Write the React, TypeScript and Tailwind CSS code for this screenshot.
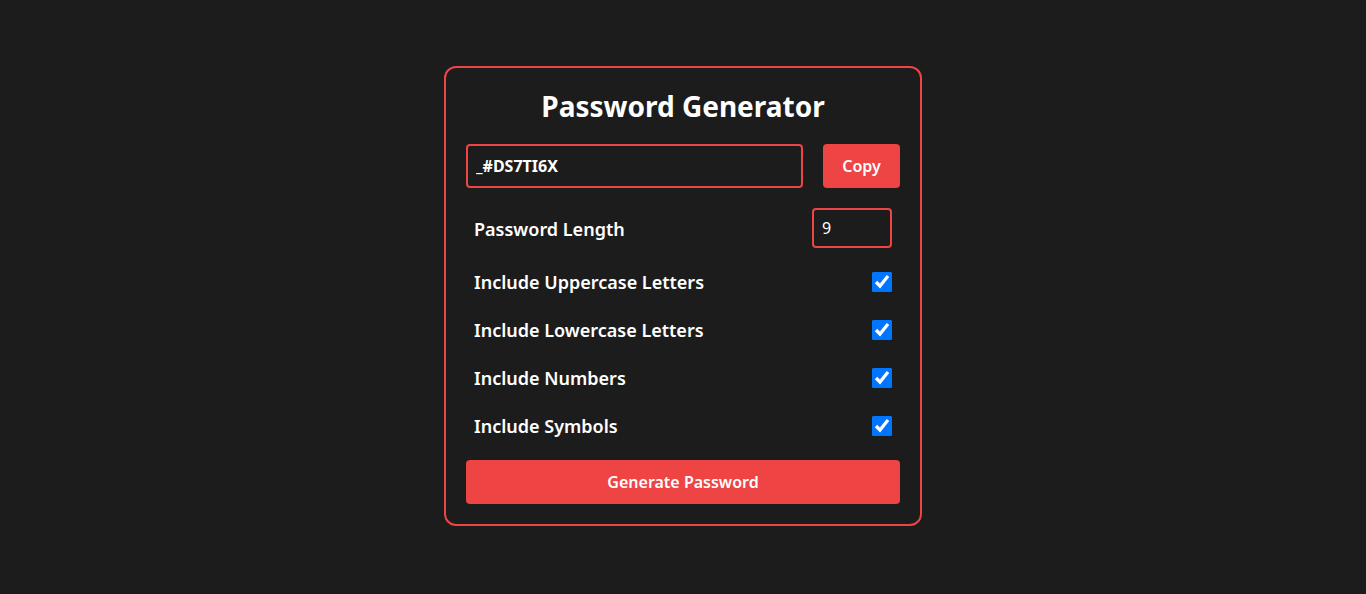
import React from "react";

const Option = ({
  label,
  checked,
  onChange,
}: {
  label: string;
  checked: boolean;
  onChange: (v: boolean) => void;
}) => (
  <label className="flex h-12 items-center justify-between px-2">
    <span className="text-lg font-semibold">{label}</span>
    <input
      type="checkbox"
      className="h-5 w-5 accent-[#0075ff]"
      checked={checked}
      onChange={(ev) => onChange(ev.currentTarget.checked)}
    />
  </label>
);

const App = () => {
  const [password] = React.useState("_#DS7TI6X");
  const [length, setLength] = React.useState("9");
  const [upper, setUpper] = React.useState(true);
  const [lower, setLower] = React.useState(true);
  const [numbers, setNumbers] = React.useState(true);
  const [symbols, setSymbols] = React.useState(true);

  return (
    <div
      className="flex min-h-[594px] justify-center bg-[#1c1c1c] pt-[66px] text-white"
      style={{ fontFamily: '"Noto Sans", sans-serif' }}
    >
      <div className="flex h-fit w-[478px] flex-col rounded-xl border-2 border-[#ef4444] bg-[#1c1c1c] p-5">
        <h1 className="h-9 text-center text-[28px] leading-9 font-bold">
          Password Generator
        </h1>
        <div className="mt-5 flex gap-5">
          <input
            type="text"
            readOnly
            value={password}
            className="h-11 flex-1 rounded border-2 border-[#ef4444] bg-transparent px-2 font-bold text-white outline-none"
          />
          <button className="h-11 w-[77px] rounded bg-[#ef4444] font-semibold text-white">
            Copy
          </button>
        </div>
        <div className="mt-5 flex h-10 items-center justify-between pl-2">
          <span className="pt-px text-lg font-semibold">Password Length</span>
          <input
            type="number"
            value={length}
            onChange={(ev) => setLength(ev.currentTarget.value)}
            className="mr-2 h-10 w-20 rounded border-2 border-[#ef4444] bg-transparent px-2 text-white outline-none"
          />
        </div>
        <div className="mt-[10px] flex flex-col">
          <Option label="Include Uppercase Letters" checked={upper} onChange={setUpper} />
          <Option label="Include Lowercase Letters" checked={lower} onChange={setLower} />
          <Option label="Include Numbers" checked={numbers} onChange={setNumbers} />
          <Option label="Include Symbols" checked={symbols} onChange={setSymbols} />
        </div>
        <button className="mt-[10px] h-11 w-full rounded bg-[#ef4444] font-semibold text-white">
          Generate Password
        </button>
      </div>
    </div>
  );
};

export default App;
